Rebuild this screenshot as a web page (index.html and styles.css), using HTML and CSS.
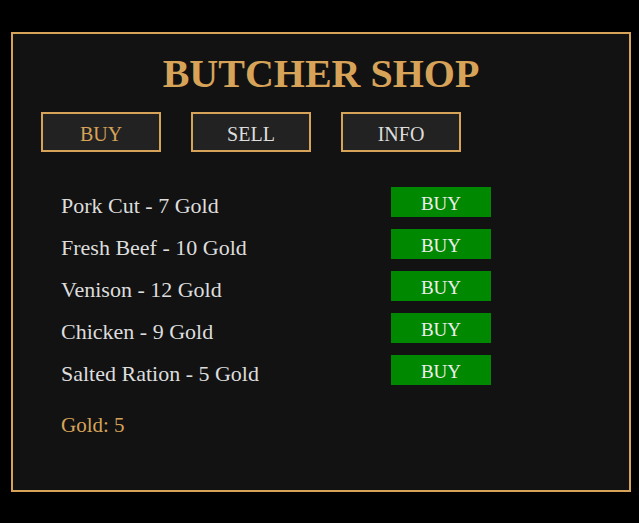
FILE: index.html
```html
<!DOCTYPE html>
<html lang="en">
<head>
<meta charset="utf-8">
<title>Butcher Shop</title>
<link rel="stylesheet" href="styles.css">
</head>
<body>
  <div class="shop">
    <h1 class="shop-title">BUTCHER SHOP</h1>
    <nav class="tabs">
      <button class="tab tab-active">BUY</button>
      <button class="tab">SELL</button>
      <button class="tab">INFO</button>
    </nav>
    <ul class="items">
      <li class="item"><span class="item-label">Pork Cut - 7 Gold</span><button class="buy-btn">BUY</button></li>
      <li class="item"><span class="item-label">Fresh Beef - 10 Gold</span><button class="buy-btn">BUY</button></li>
      <li class="item"><span class="item-label">Venison - 12 Gold</span><button class="buy-btn">BUY</button></li>
      <li class="item"><span class="item-label">Chicken - 9 Gold</span><button class="buy-btn">BUY</button></li>
      <li class="item"><span class="item-label">Salted Ration - 5 Gold</span><button class="buy-btn">BUY</button></li>
    </ul>
    <p class="gold">Gold: 5</p>
  </div>
</body>
</html>
```

FILE: styles.css
```css
html, body {
  margin: 0;
  background: #000;
}

body {
  padding: 32px 0 0 11px;
  font-family: "Liberation Serif", "Times New Roman", serif;
}

.shop {
  box-sizing: border-box;
  width: 620px;
  height: 460px;
  border: 2px solid #d6a359;
  background: #121212;
  padding: 12px 28px 0 28px;
}

.shop-title {
  margin: 0;
  text-align: center;
  font-size: 40px;
  line-height: 56px;
  font-weight: bold;
  color: #d6a359;
}

.tabs {
  display: flex;
  gap: 30px;
  margin-top: 10px;
}

.tab {
  box-sizing: border-box;
  width: 120px;
  height: 40px;
  border: 2px solid #d6a359;
  background: #222;
  color: #ddd;
  font-family: inherit;
  font-size: 20px;
  line-height: 30px;
  padding: 3px 0 0;
  margin: 0;
}

.tab-active {
  color: #d6a359;
}

.items {
  list-style: none;
  margin: 35px 0 0;
  padding: 0 0 0 20px;
  display: flex;
  flex-direction: column;
  gap: 8px;
}

.item {
  display: flex;
  align-items: flex-start;
}

.item-label {
  width: 330px;
  font-size: 22px;
  line-height: 30px;
  padding-top: 4px;
  color: #ddd;
}

.buy-btn {
  box-sizing: border-box;
  width: 100px;
  height: 30px;
  border: none;
  background: #008800;
  color: #eee;
  font-family: inherit;
  font-size: 19px;
  line-height: 26px;
  padding: 4px 0 0;
  margin: 0;
}

.gold {
  margin: 21px 0 0 20px;
  font-size: 21px;
  line-height: 30px;
  color: #d6a359;
}
```
